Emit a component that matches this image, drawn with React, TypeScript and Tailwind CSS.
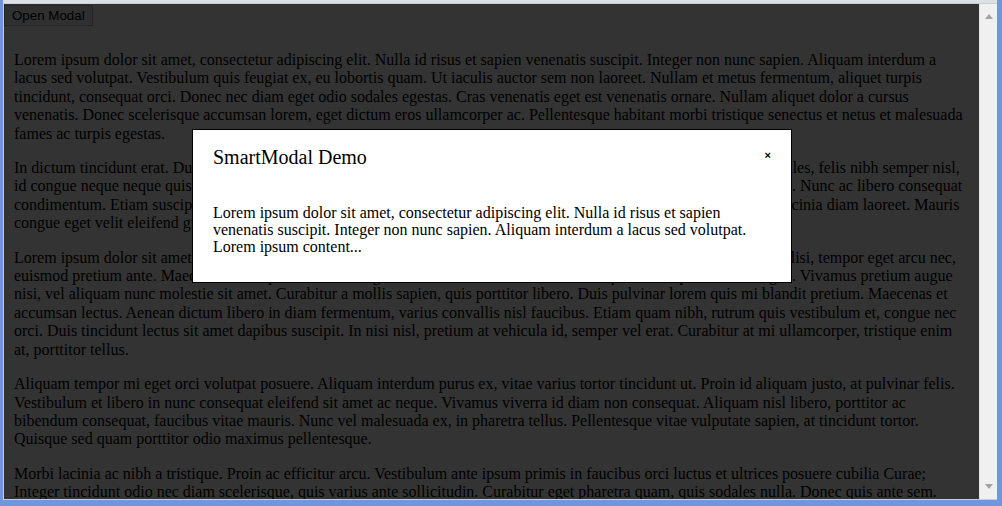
import React from "react";

const paragraphs: string[] = [
  "Lorem ipsum dolor sit amet, consectetur adipiscing elit. Nulla id risus et sapien venenatis suscipit. Integer non nunc sapien. Aliquam interdum a lacus sed volutpat. Vestibulum quis feugiat ex, eu lobortis quam. Ut iaculis auctor sem non laoreet. Nullam et metus fermentum, aliquet turpis tincidunt, consequat orci. Donec nec diam eget odio sodales egestas. Cras venenatis eget est venenatis ornare. Nullam aliquet dolor a cursus venenatis. Donec scelerisque accumsan lorem, eget dictum eros ullamcorper ac. Pellentesque habitant morbi tristique senectus et netus et malesuada fames ac turpis egestas.",
  "In dictum tincidunt erat. Duis vel turpis ac nunc tempor lobortis. Nam mi a. Vestibulum pretium, mauris eget viverra sodales, felis nibh semper nisl, id congue neque neque quis nunc. Sed malesuada lorem ut mauris tincidunt, vitae pulvinar augue luctus. Fusce vitae risus. Nunc ac libero consequat condimentum. Etiam suscipit ante vel mi ultricies, nec tristique ipsum porta. Donec ut at elit nec orci. Praesent sit amet lacinia diam laoreet. Mauris congue eget velit eleifend gravida. Sed in ornare nisi, quis rhoncus arcu.",
  "Lorem ipsum dolor sit amet, consectetur adipiscing elit. Sed auctor sem quis ligula fermentum, sed porta justo. Nulla facilisi, tempor eget arcu nec, euismod pretium ante. Maecenas vitae quam at libero dignissim ultricies in et lectus. Sed vel purus a turpis mollis congue. Vivamus pretium augue nisi, vel aliquam nunc molestie sit amet. Curabitur a mollis sapien, quis porttitor libero. Duis pulvinar lorem quis mi blandit pretium. Maecenas et accumsan lectus. Aenean dictum libero in diam fermentum, varius convallis nisl faucibus. Etiam quam nibh, rutrum quis vestibulum et, congue nec orci. Duis tincidunt lectus sit amet dapibus suscipit. In nisi nisl, pretium at vehicula id, semper vel erat. Curabitur at mi ullamcorper, tristique enim at, porttitor tellus.",
  "Aliquam tempor mi eget orci volutpat posuere. Aliquam interdum purus ex, vitae varius tortor tincidunt ut. Proin id aliquam justo, at pulvinar felis. Vestibulum et libero in nunc consequat eleifend sit amet ac neque. Vivamus viverra id diam non consequat. Aliquam nisl libero, porttitor ac bibendum consequat, faucibus vitae mauris. Nunc vel malesuada ex, in pharetra tellus. Pellentesque vitae vulputate sapien, at tincidunt tortor. Quisque sed quam porttitor odio maximus pellentesque.",
  "Morbi lacinia ac nibh a tristique. Proin ac efficitur arcu. Vestibulum ante ipsum primis in faucibus orci luctus et ultrices posuere cubilia Curae; Integer tincidunt odio nec diam scelerisque, quis varius ante sollicitudin. Curabitur eget pharetra quam, quis sodales nulla. Donec quis ante sem. Pellentesque est nisi, eleifend vel porttitor id, lobortis non nunc. Aliquam erat volutpat. Maecenas ut aliquet nisl, nec ultricies nisl.",
];

export default function App() {
  return (
    <div className="flex h-[506px] w-[1002px] flex-col bg-[#7096dd] pb-[6px] pl-[3px] pr-[5px]">
      <div className="h-[3px] shrink-0 bg-[#dcdfe4]" />
      <div className="flex min-h-0 flex-1 border-b border-l border-t border-[#c9ced6]">
        <div className="relative min-h-0 flex-1 overflow-hidden bg-white font-['Liberation_Serif',serif] text-[16px] leading-[18.4px] text-black">
          <div className="px-[10px]">
            <button className="ml-[-10px] mt-[1px] block border border-[#acb4c8] bg-[#eeeeee] px-[7px] py-[2px] font-['Liberation_Sans',Arial,sans-serif] text-[13.33px] leading-[15px] text-black">
              Open Modal
            </button>
            <div className="pt-[25px]">
              {paragraphs.map((p, i) => (
                <p key={i} className="mb-[16px]">
                  {p}
                </p>
              ))}
            </div>
          </div>
          <div className="absolute inset-0 bg-black/80" />
          <div className="absolute left-[188px] top-[125px] w-[600px] border border-black bg-white px-[20px] pb-[27px] pt-[16px]">
            <div className="flex items-center justify-between">
              <h2 className="text-[20px] leading-[normal]">SmartModal Demo</h2>
              <span className="mb-[4px] font-['Liberation_Sans',Arial,sans-serif] text-[11px] font-bold leading-none">
                ×
              </span>
            </div>
            <p className="mt-[35px] text-[16px] leading-[17px]">
              Lorem ipsum dolor sit amet, consectetur adipiscing elit. Nulla id risus et sapien venenatis suscipit. Integer non nunc sapien. Aliquam interdum a lacus sed volutpat. Lorem ipsum content...
            </p>
          </div>
        </div>
        <div className="flex w-[18px] shrink-0 flex-col items-center justify-between border-l border-[#e3e3e3] bg-[#f0f0f0] py-[10px]">
          <svg width="8" height="5" viewBox="0 0 8 5">
            <polygon points="4,0 8,5 0,5" fill="#a3a3a3" />
          </svg>
          <svg width="8" height="5" viewBox="0 0 8 5">
            <polygon points="0,0 8,0 4,5" fill="#a3a3a3" />
          </svg>
        </div>
      </div>
    </div>
  );
}
